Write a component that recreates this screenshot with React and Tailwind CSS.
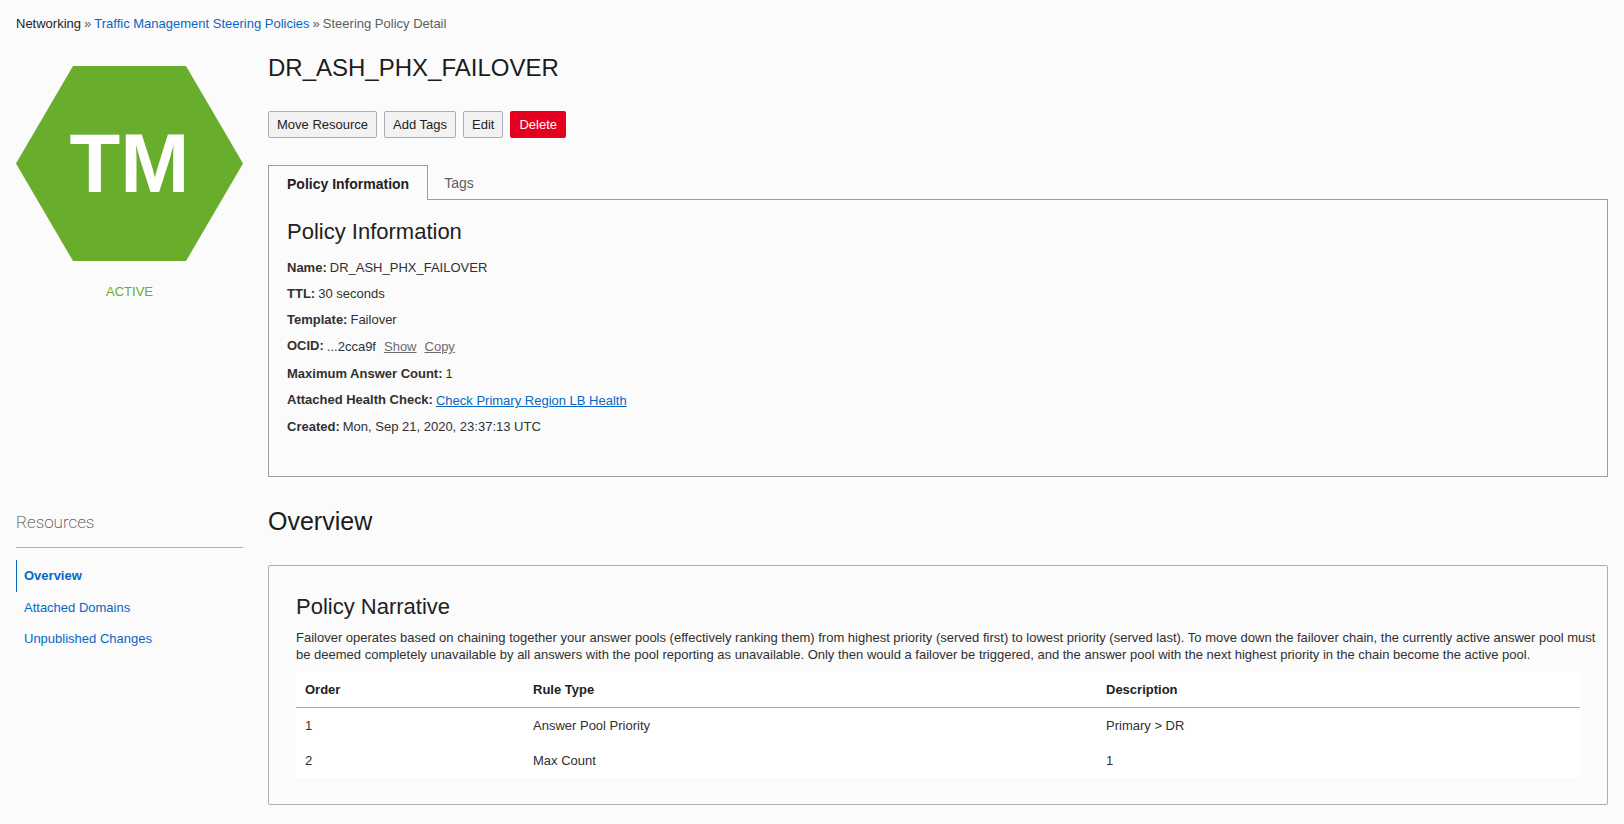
import React from "react";

const rules = [
  { order: "1", type: "Answer Pool Priority", description: "Primary > DR" },
  { order: "2", type: "Max Count", description: "1" },
];

const actionClass =
  "h-[27px] rounded-[2px] border border-[#aaaeb8] bg-[#f2f2f3] px-2 text-[#222222]";

const headClass = "h-9 border-b border-[#a9adb8] px-[9px] py-0";

const cellClass = "h-[35px] px-[9px] py-0";

function Detail({ label, children, rowClass = "h-[26px] leading-[26px]" }) {
  return (
    <div className={`flex items-start gap-[3px] ${rowClass}`}>
      <dt className="font-bold leading-[26px]">{label}:</dt>
      <dd>{children}</dd>
    </div>
  );
}

function Breadcrumb() {
  return (
    <nav aria-label="Breadcrumb" className="text-[#5f5f5f]">
      <ol className="flex gap-[3px] leading-4">
        <li className="text-[#222222]">Networking</li>
        <li aria-hidden="true">»</li>
        <li>
          <a href="#policies" className="text-[#0767c5]">Traffic Management Steering Policies</a>
        </li>
        <li aria-hidden="true">»</li>
        <li>Steering Policy Detail</li>
      </ol>
    </nav>
  );
}

function StatusBadge() {
  return (
    <div className="pt-[14px] text-center">
      <div className="grid w-full">
        <svg viewBox="0 0 227 195" className="col-start-1 row-start-1 w-full" aria-hidden="true">
          <path d="M57 0H170L227 97.5L170 195H57L0 97.5Z" fill="#68ad2c" />
        </svg>
        <span className="col-start-1 row-start-1 self-center text-[83px] leading-[80px] font-bold text-white">
          TM
        </span>
      </div>
      <p className="mt-[23px] leading-4 text-[#68ad2c]">ACTIVE</p>
    </div>
  );
}

function PolicyTabs() {
  return (
    <section className="mt-[27px]">
      <div role="tablist" className="flex h-[34px]">
        <button
          type="button"
          role="tab"
          aria-selected="true"
          className="z-10 -mb-px border border-b-0 border-[#9c9c9c] bg-[#fbfbfb] px-[18px] pt-[2px] text-[14px] font-bold text-[#222222]"
        >
          Policy Information
        </button>
        <button
          type="button"
          role="tab"
          aria-selected="false"
          className="px-4 pt-[2px] text-[14px] text-[#5f5f5f]"
        >
          Tags
        </button>
      </div>
      <div role="tabpanel" className="border border-[#9c9c9c] px-[18px] pt-4 pb-9">
        <h2 className="text-[22px] leading-8 text-[#222222]">Policy Information</h2>
        <dl className="mt-[7px]">
          <Detail label="Name">DR_ASH_PHX_FAILOVER</Detail>
          <Detail label="TTL">30 seconds</Detail>
          <Detail label="Template">Failover</Detail>
          <Detail label="OCID" rowClass="h-7 leading-7">
            <span>...2cca9f</span>
            <button type="button" className="ml-2 text-[#6b6b6b] underline">Show</button>
            <button type="button" className="ml-2 text-[#6b6b6b] underline">Copy</button>
          </Detail>
          <Detail label="Maximum Answer Count">1</Detail>
          <Detail label="Attached Health Check" rowClass="h-[27px] leading-[27px]">
            <a href="#health-check" className="text-[#0767c5] underline">Check Primary Region LB Health</a>
          </Detail>
          <Detail label="Created">Mon, Sep 21, 2020, 23:37:13 UTC</Detail>
        </dl>
      </div>
    </section>
  );
}

function Resources() {
  return (
    <aside>
      <h2 className="border-b border-[#a9adb8] pt-px pb-[9px] font-[Roboto,sans-serif] text-[17px] leading-8 font-extralight text-[#444444]">
        Resources
      </h2>
      <nav aria-label="Resources" className="mt-3 flex flex-col text-[#0767c5]">
        <a href="#overview" aria-current="page" className="border-l border-[#0767c5] pl-[7px] font-bold leading-8">
          Overview
        </a>
        <a href="#domains" className="pl-2 leading-[31px]">Attached Domains</a>
        <a href="#changes" className="pl-2 leading-[31px]">Unpublished Changes</a>
      </nav>
    </aside>
  );
}

function Overview() {
  return (
    <section className="min-w-0">
      <h2 className="text-[25px] leading-8 text-[#1b1b1b]">Overview</h2>
      <div className="mt-7 rounded-[2px] border border-[#a9adb8] px-[27px] pt-[25px] pb-[26px]">
        <h3 className="text-[22px] leading-8 text-[#222222]">Policy Narrative</h3>
        <p className="-mr-5 mt-[6px] leading-[17px]">
          Failover operates based on chaining together your answer pools (effectively ranking them) from
          highest priority (served first) to lowest priority (served last). To move down the failover chain,
          the currently active answer pool must be deemed completely unavailable by all answers with the pool
          reporting as unavailable. Only then would a failover be triggered, and the answer pool with the next
          highest priority in the chain become the active pool.
        </p>
        <table className="mt-[9px] w-full table-fixed border-separate border-spacing-0 bg-white text-left">
          <colgroup>
            <col className="w-[228px]" />
            <col className="w-[573px]" />
            <col />
          </colgroup>
          <thead className="text-[#222222]">
            <tr>
              <th scope="col" className={headClass}>Order</th>
              <th scope="col" className={headClass}>Rule Type</th>
              <th scope="col" className={headClass}>Description</th>
            </tr>
          </thead>
          <tbody>
            {rules.map((rule) => (
              <tr key={rule.order}>
                <td className={cellClass}>{rule.order}</td>
                <td className={cellClass}>{rule.type}</td>
                <td className={cellClass}>{rule.description}</td>
              </tr>
            ))}
          </tbody>
        </table>
      </div>
    </section>
  );
}

export default function App() {
  return (
    <main className="min-h-screen bg-[#fbfbfb] px-4 pt-4 pb-[18px] font-['Liberation_Sans',Arial,sans-serif] text-[13px] text-[#303030]">
      <Breadcrumb />
      <div className="mt-5 grid grid-cols-[227px_minmax(0,1fr)] gap-x-[25px] gap-y-7">
        <StatusBadge />
        <div className="min-w-0">
          <h1 className="text-[24px] leading-8 text-[#1b1b1b]">DR_ASH_PHX_FAILOVER</h1>
          <div className="mt-[27px] flex gap-[7px]">
            <button type="button" className={actionClass}>Move Resource</button>
            <button type="button" className={actionClass}>Add Tags</button>
            <button type="button" className={actionClass}>Edit</button>
            <button type="button" className="h-[27px] rounded-[2px] bg-[#e6001f] px-[9px] text-white">
              Delete
            </button>
          </div>
          <PolicyTabs />
        </div>
        <Resources />
        <Overview />
      </div>
    </main>
  );
}
